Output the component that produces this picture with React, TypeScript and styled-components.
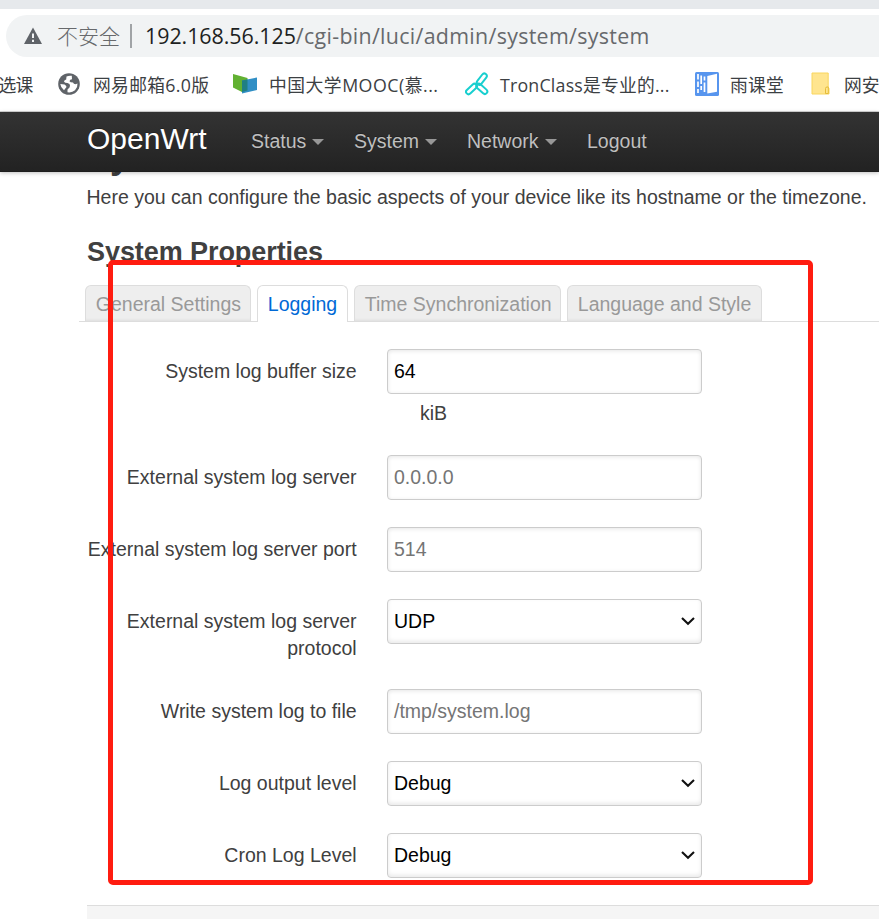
import React from 'react';
import styled, { createGlobalStyle } from 'styled-components';

const GlobalStyle = createGlobalStyle`
  * { box-sizing: border-box; }
  html, body { margin: 0; padding: 0; background: #fff; }
  body { overflow: hidden; }
`;

const sans = '"Liberation Sans", Arial, sans-serif';
const chromeSans = '"Open Sans", "Noto Sans CJK SC", sans-serif';

const Window = styled.div`
  position: relative;
  width: 879px;
  height: 919px;
  overflow: hidden;
  background: #fff;
  color: #404040;
  font: 19.5px/27px ${sans};
`;

const TabStrip = styled.div`
  height: 9px;
  background: #e6e9ec;
`;

const AddressRow = styled.div`
  padding: 6px 0 0 6px;
`;

const AddressBar = styled.div`
  display: flex;
  align-items: center;
  height: 42px;
  padding-left: 17px;
  border-radius: 21px 0 0 21px;
  background: #f1f3f4;
  white-space: nowrap;
  font-family: ${chromeSans};
  color: #67696c;
`;

const Insecure = styled.span`
  width: 64px;
  margin-left: 14px;
  font-size: 21px;
  font-weight: 300;
`;

const Divider = styled.span`
  width: 2px;
  height: 24px;
  margin: 0 13px 0 9px;
  background: #a0a3a6;
`;

const Url = styled.span`
  padding-bottom: 1px;
  font-size: 21.4px;
  letter-spacing: 0.31px;
`;

const Host = styled.span`
  color: #1d1f22;
  letter-spacing: -0.04px;
`;

const Bookmarks = styled.div`
  display: flex;
  height: 55px;
  padding-top: 2px;
  border-bottom: 1px solid #d5d5d5;
  white-space: nowrap;
  font-family: ${chromeSans};
  font-size: 17.8px;
  color: #3c4043;
`;

const Bookmark = styled.div<{ $width: number; $gap: number }>`
  display: flex;
  flex: none;
  align-items: center;
  gap: ${(p) => p.$gap}px;
  width: ${(p) => p.$width}px;
  svg { flex: none; margin-bottom: 3px; }
  &:first-child span { margin-left: -1.5px; }
`;

const BookmarkLabel = styled.span<{ $spacing?: number }>`
  letter-spacing: ${(p) => p.$spacing ?? 0}px;
`;

const Navbar = styled.nav`
  position: relative;
  z-index: 1;
  display: flex;
  height: 60px;
  padding-left: 87px;
  background: linear-gradient(#333, #222);
  box-shadow: 0 1px 4px rgba(0, 0, 0, 0.25), inset 0 -1px 0 rgba(0, 0, 0, 0.1);
  text-shadow: 0 -1px 0 rgba(0, 0, 0, 0.25);
`;

const Brand = styled.a`
  width: 164px;
  font-size: 30px;
  line-height: 54px;
  color: #fff;
`;

const NavItem = styled.a<{ $width: number }>`
  display: flex;
  align-items: center;
  gap: 6px;
  width: ${(p) => p.$width}px;
  height: 58px;
  color: #bfbfbf;
`;

const Caret = styled.i`
  margin-top: 2px;
  border: 6px solid transparent;
  border-top-color: #979797;
  border-bottom: 0;
`;

const Content = styled.main`
  padding-left: 87px;
`;

const PageTitle = styled.h2`
  margin: -43px 0 0 -1px;
  font-size: 36px;
  line-height: 54px;
`;

const Description = styled.p`
  margin: 1px 0 0 -0.5px;
  white-space: nowrap;
`;

const SectionTitle = styled.h3`
  margin: 14px 0 0;
  font-size: 27px;
  line-height: 54px;
  letter-spacing: -0.07px;
`;

const Tabs = styled.div`
  display: flex;
  gap: 6px;
  height: 37px;
  margin: 6px 0 27px -8px;
  padding-left: 6px;
  border-bottom: 1px solid #ddd;
`;

const Tab = styled.a<{ $width: number; $active?: boolean }>`
  width: ${(p) => p.$width}px;
  height: ${(p) => (p.$active ? 37 : 36)}px;
  padding-left: 9.8px;
  border: 1px solid #ddd;
  border-bottom: 0;
  border-radius: 6px 6px 0 0;
  background: ${(p) => (p.$active ? '#fff' : '#eee')};
  box-shadow: ${(p) => (p.$active ? 'none' : 'inset 0 -3px 3px -2px rgba(0,0,0,.07)')};
  color: ${(p) => (p.$active ? '#0069d6' : '#999')};
  line-height: 36px;
  white-space: nowrap;
`;

const Field = styled.div`
  display: flex;
  gap: 30px;
  margin-bottom: 27px;
`;

const Label = styled.label`
  width: 270px;
  padding: 9px 0.4px 0 0;
  text-align: right;
`;

const Control = styled.div`
  width: 315px;
`;

const Box = styled.div<{ $muted?: boolean }>`
  display: flex;
  align-items: center;
  justify-content: space-between;
  height: 45px;
  padding: 0 5px 0 6px;
  border: 1px solid #ccc;
  border-radius: 4px;
  background: #fff;
  box-shadow: inset 0 1px 4px rgba(0, 0, 0, 0.1);
  color: ${(p) => (p.$muted ? '#757575' : '#000')};
  svg { margin-bottom: 2px; }
`;

const SelectBox = styled(Box)`
  box-shadow: inset 0 -2px 4px rgba(0, 0, 0, 0.09);
`;

const Unit = styled.div`
  margin: 6px 0 1px;
  padding-left: 33px;
`;

const Form = styled.form`
  margin: 0;
`;

const Actions = styled.div`
  height: 40px;
  border-top: 1px solid #ddd;
  background: #f5f5f5;
`;

const Highlight = styled.div`
  position: absolute;
  left: 108px;
  top: 260px;
  width: 705px;
  height: 625px;
  border: 5px solid #ff1c10;
  border-radius: 5px;
`;

const WarningIcon = () => (
  <svg width="20" height="18" viewBox="0 0 20 18">
    <path d="M10 0.5 19 17H1Z" fill="#5f6368" />
    <path d="M10 6.5v4.5M10 12.7v2.2" stroke="#f1f3f4" strokeWidth="2" />
  </svg>
);

const GlobeIcon = () => (
  <svg width="22" height="22" viewBox="0 0 22 22">
    <circle cx="11" cy="11" r="10.8" fill="#5f6368" />
    <path
      d="M13.800 2.800Q11 2.300 8.500 3.600L8.200 6.500Q6.200 7 6 8.800Q7 10 9.500 10L11.500 11Q12.500 12.500 11.500 14.500L9.500 16.500V19.300Q14 20 17 17.300Q19.800 14.500 19.500 10.500L17.500 11.200Q15.500 11 15 9.500Q12 9.500 11.500 8.300Q11.800 6.500 14 6.300Z M2.300 11 6.500 11.500Q8.500 12.500 8.500 14L6 17.200Q2.700 14.800 2.300 11Z"
      fill="#fff"
    />
  </svg>
);

const MoocIcon = () => (
  <svg width="26" height="21" viewBox="0 0 26 21">
    <path d="M1 1 15.500 5V17.500L10 19 1 14.500Z" fill="#62b132" />
    <path d="M10 7.500 25 4.500V17L10 20.500Z" fill="#318fc5" />
    <path d="M10 7.500 15.500 6.400V17.500L10 19Z" fill="#207f83" />
  </svg>
);

const TronIcon = () => (
  <svg width="24" height="24" viewBox="0 0 24 24" fill="none" stroke="#18cfcf" strokeWidth="2">
    <rect x="-2.500" y="-6.500" width="5" height="13" rx="2.500" transform="translate(16.800 7.200) rotate(38)" />
    <rect x="-2.500" y="-6.500" width="5" height="13" rx="2.500" transform="translate(6.500 17) rotate(47)" />
    <rect x="-2.500" y="-6.500" width="5" height="13" rx="2.500" transform="translate(16.800 16.800) rotate(-48)" />
  </svg>
);

const RainIcon = () => (
  <svg width="24" height="24" viewBox="0 0 24 24">
    <rect width="24" height="24" rx="1.500" fill="#5795ee" />
    <path d="M12.300 4 22 1.800V19.800L12.300 21.500Z" fill="#fff" />
    <path
      d="M3 2V7.500M3 9.500V15M3 17V21M6.200 3.500V12M6.200 14V18M9.500 4.500V8.500M9.500 10.500V20"
      stroke="#fff"
      strokeWidth="1.700"
    />
  </svg>
);

const FolderIcon = () => (
  <svg width="19" height="23" viewBox="0 0 19 23">
    <path d="M1 1H17.200V15.500L18 16.500V22H1Z" fill="#ffe58f" stroke="#f9d65e" />
    <path d="M14.500 21.500V16.500Q14.500 15 16 15H17.300V21.500Z" fill="#ffe58f" stroke="#e5bc38" />
  </svg>
);

const Chevron = () => (
  <svg width="16" height="10" viewBox="0 0 16 10">
    <path d="m2 2 6 5.800L14 2" fill="none" stroke="#111" strokeWidth="2.100" />
  </svg>
);

type FieldSpec = {
  label: string;
  value: string;
  kind?: 'placeholder' | 'select';
  unit?: string;
};

const fields: FieldSpec[] = [
  { label: 'System log buffer size', value: '64', unit: 'kiB' },
  { label: 'External system log server', value: '0.0.0.0', kind: 'placeholder' },
  { label: 'External system log server port', value: '514', kind: 'placeholder' },
  { label: 'External system log server protocol', value: 'UDP', kind: 'select' },
  { label: 'Write system log to file', value: '/tmp/system.log', kind: 'placeholder' },
  { label: 'Log output level', value: 'Debug', kind: 'select' },
  { label: 'Cron Log Level', value: 'Debug', kind: 'select' },
];

const FieldRow = ({ label, value, kind, unit }: FieldSpec) => (
  <Field>
    <Label>{label}</Label>
    <Control>
      {kind === 'select' ? (
        <SelectBox>
          {value}
          <Chevron />
        </SelectBox>
      ) : (
        <Box $muted={kind === 'placeholder'}>{value}</Box>
      )}
      {unit && <Unit>{unit}</Unit>}
    </Control>
  </Field>
);

export default function App() {
  return (
    <Window>
      <GlobalStyle />
      <TabStrip />
      <AddressRow>
        <AddressBar>
          <WarningIcon />
          <Insecure>不安全</Insecure>
          <Divider />
          <Url>
            <Host>192.168.56.125</Host>/cgi-bin/luci/admin/system/system
          </Url>
        </AddressBar>
      </AddressRow>
      <Bookmarks>
        <Bookmark $width={58} $gap={0}>
          <BookmarkLabel $spacing={-0.7}>选课</BookmarkLabel>
        </Bookmark>
        <Bookmark $width={174} $gap={13}>
          <GlobeIcon />
          <BookmarkLabel $spacing={0.3}>网易邮箱6.0版</BookmarkLabel>
        </Bookmark>
        <Bookmark $width={233} $gap={11}>
          <MoocIcon />
          <BookmarkLabel $spacing={0.5}>中国大学MOOC(慕...</BookmarkLabel>
        </Bookmark>
        <Bookmark $width={230} $gap={11}>
          <TronIcon />
          <BookmarkLabel $spacing={0.2}>TronClass是专业的...</BookmarkLabel>
        </Bookmark>
        <Bookmark $width={116} $gap={11}>
          <RainIcon />
          <BookmarkLabel $spacing={0.2}>雨课堂</BookmarkLabel>
        </Bookmark>
        <Bookmark $width={68} $gap={14}>
          <FolderIcon />
          <BookmarkLabel>网安</BookmarkLabel>
        </Bookmark>
      </Bookmarks>
      <Navbar>
        <Brand>OpenWrt</Brand>
        <NavItem $width={103}>Status<Caret /></NavItem>
        <NavItem $width={113}>System<Caret /></NavItem>
        <NavItem $width={120}>Network<Caret /></NavItem>
        <NavItem $width={70}>Logout</NavItem>
      </Navbar>
      <Content>
        <PageTitle>System</PageTitle>
        <Description>
          Here you can configure the basic aspects of your device like its hostname or the timezone.
        </Description>
        <SectionTitle>System Properties</SectionTitle>
        <Tabs>
          <Tab $width={166}>General Settings</Tab>
          <Tab $width={91} $active>Logging</Tab>
          <Tab $width={207}>Time Synchronization</Tab>
          <Tab $width={195}>Language and Style</Tab>
        </Tabs>
        <Form>
          {fields.map((f) => (
            <FieldRow key={f.label} {...f} />
          ))}
        </Form>
        <Actions />
      </Content>
      <Highlight />
    </Window>
  );
}
